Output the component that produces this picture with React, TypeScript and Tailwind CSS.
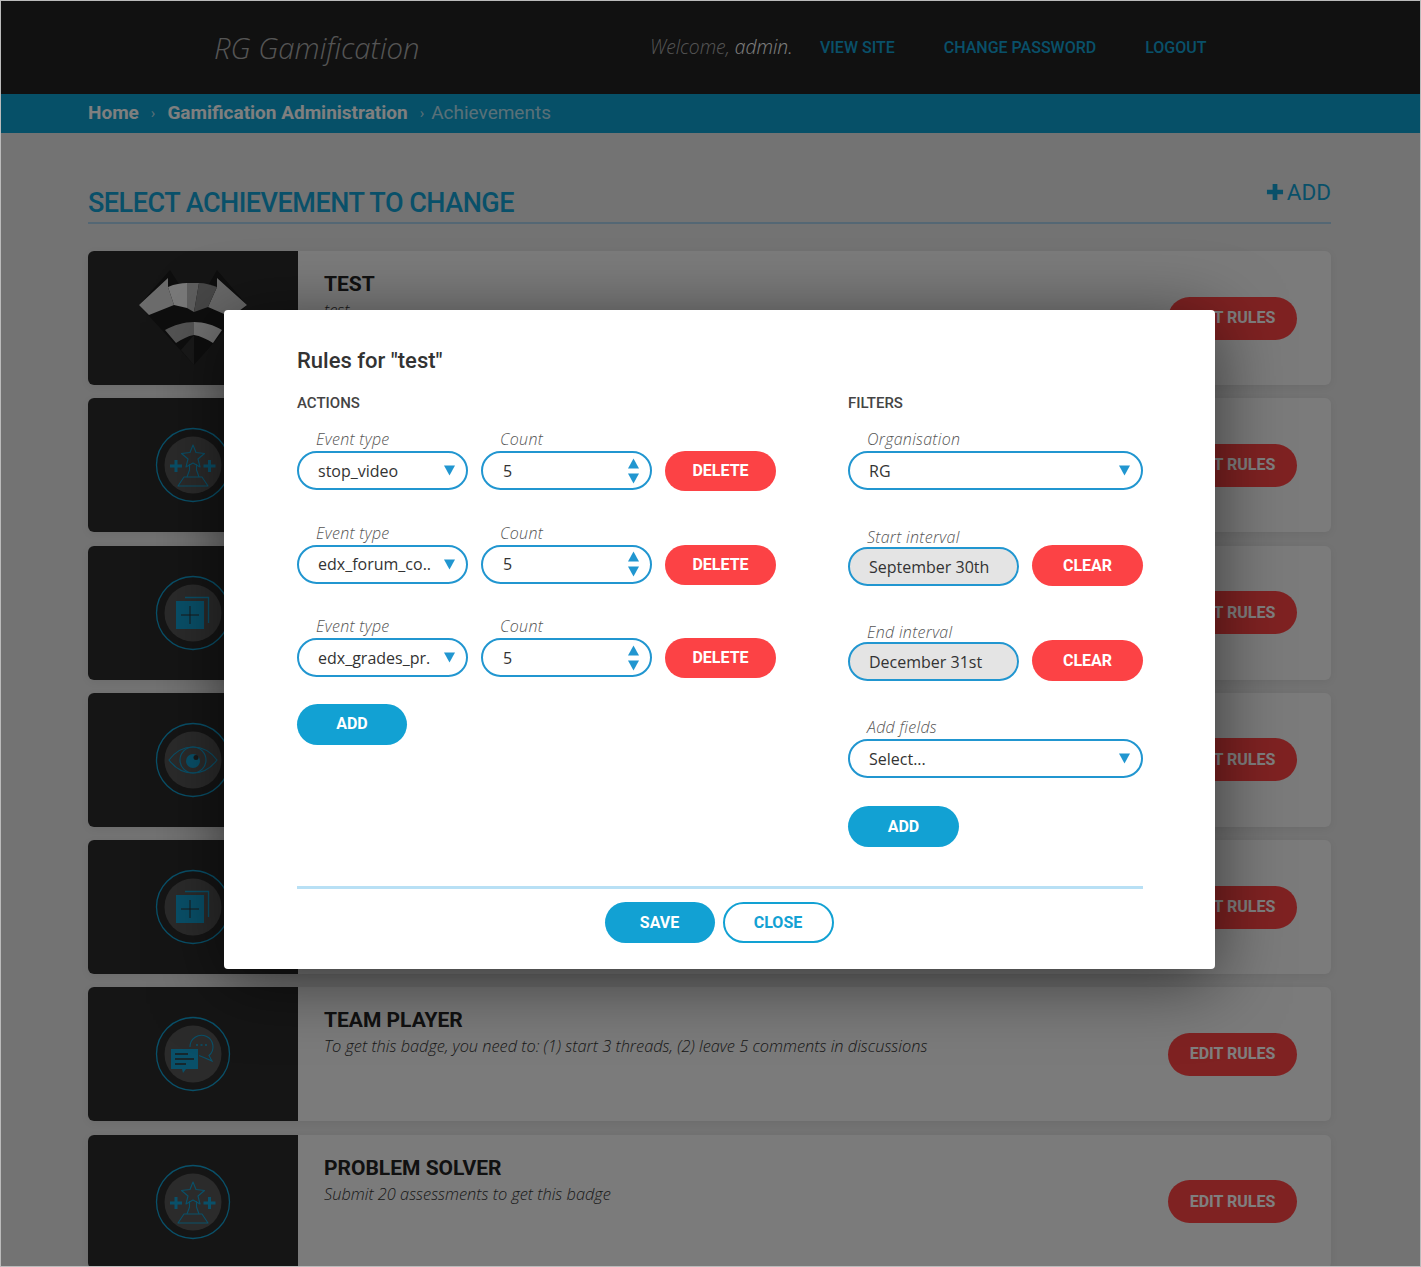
import React from "react";

const BLUE = "#12a1d3";

function Ring({ children }: { children: React.ReactNode }) {
  return (
    <svg width="78" height="78" viewBox="0 0 78 78" fill="none">
      <circle cx="39" cy="39" r="36.5" stroke={BLUE} strokeWidth="1.3" />
      <circle cx="39" cy="39" r="28.5" fill="#565656" />
      {children}
    </svg>
  );
}

function Trophy() {
  return (
    <Ring>
      <g stroke={BLUE} strokeWidth="1.1" fill="none" strokeLinejoin="round">
        <path d="M39 19l3 7.500 8.500 1-6.500 5.500 2 8-7-4-7 4 2-8-6.500-5.500 8.500-1z" />
        <path d="M35.500 38v6l-2.500 7M42.500 38v6l2.500 7" />
        <path d="M30 51h18l6 9H24z" />
      </g>
      <path d="M20.500 34h3v4.500H28v3h-4.500V46h-3v-4.500H16v-3h4.500z" fill={BLUE} />
      <path d="M54 34h3v4.500h4.500v3H57V46h-3v-4.500h-4.500v-3H54z" fill={BLUE} />
    </Ring>
  );
}

function SquarePlus() {
  return (
    <Ring>
      <path d="M31 23.500H54.500V49" stroke={BLUE} strokeWidth="1.300" fill="none" />
      <rect x="22" y="27" width="28" height="28" fill={BLUE} />
      <path d="M36 32v18M27 41h18" stroke="#333" strokeWidth="1" />
    </Ring>
  );
}

function Eye() {
  return (
    <Ring>
      <path d="M15 39c6-8 15-13 24-13s18 5 24 13c-6 8-15 13-24 13s-18-5-24-13z" stroke={BLUE} strokeWidth="1.200" fill="none" />
      <circle cx="39" cy="39" r="13" stroke={BLUE} strokeWidth="1.200" fill="none" />
      <circle cx="39" cy="40" r="7" fill={BLUE} />
      <circle cx="42" cy="36.500" r="2.500" fill="#333" />
    </Ring>
  );
}

function Chat() {
  return (
    <Ring>
      <path d="M36 32a11.500 11.500 0 1 1 19 8.500l3 5.500-8-3.500-5-2" stroke={BLUE} strokeWidth="1.100" fill="none" />
      <path d="M42 30h2M46.500 30h2M51 30h2" stroke={BLUE} strokeWidth="1.500" />
      <path d="M17 34h27v20H32l-3 4-1-4H17z" fill={BLUE} />
      <path d="M21 39h13M21 44h19M21 49h11" stroke="#333" strokeWidth="1.500" />
    </Ring>
  );
}

function Fox() {
  return (
    <svg width="112" height="96" viewBox="0 0 112 96">
      <path d="M33 0L2 35 57 95 110 35 80 0 72 14H42z" fill="#1c1c1c" />
      <path d="M31 8L2 35 12 45 37 35 31 17z" fill="#d8d8d8" />
      <path d="M80 8L110 35 94 47 71 37 80 17z" fill="#d0d0d0" />
      <path d="M31 17C38 14 44 13 50 13L50 38 37 35z" fill="#f2f2f2" />
      <path d="M50 13H62L57 42 50 38z" fill="#bdbdbd" />
      <path d="M62 13C68 13 74 15 80 17L71 37 57 42z" fill="#8f8f8f" />
      <path d="M28 60C37 55 47 52 57 52L57 65C51 66 45 69 39 73z" fill="#a8a8a8" />
      <path d="M57 52C67 52 77 55 85 60L76 73C70 69 63 66 57 65z" fill="#e4e4e4" />
      <path d="M57 65L57 95 44 80z" fill="#333" />
    </svg>
  );
}

const cards: { title: string; desc: string; icon: React.ReactNode }[] = [
  { title: "TEST", desc: "test", icon: <Fox /> },
  { title: "", desc: "", icon: <Trophy /> },
  { title: "", desc: "", icon: <SquarePlus /> },
  { title: "", desc: "", icon: <Eye /> },
  { title: "", desc: "", icon: <SquarePlus /> },
  { title: "TEAM PLAYER", desc: "To get this badge, you need to: (1) start 3 threads, (2) leave 5 comments in discussions", icon: <Chat /> },
  { title: "PROBLEM SOLVER", desc: "Submit 20 assessments to get this badge", icon: <Trophy /> },
];

function Tri({ up }: { up?: boolean }) {
  return (
    <svg width="11" height="11" viewBox="0 0 11 11" className="shrink-0">
      <path d={up ? "M5.500 0.500L11 10.500H0z" : "M0 .5h11L5.500 10.500z"} fill="#2196d0" />
    </svg>
  );
}

function Label({ children, className = "" }: { children: React.ReactNode; className?: string }) {
  return <div className={`font-['Open_Sans'] italic font-light text-[16px] leading-[20px] tracking-[0.3px] text-[#555] pl-[19px] ${className}`}>{children}</div>;
}

function SelectBox({ value, w }: { value: string; w: string }) {
  return (
    <div className={`${w} h-[39px] rounded-[20px] border-2 border-[#2196d0] flex items-center pl-[19px] pr-[11px] justify-between bg-white`}>
      <span className="font-['Open_Sans'] text-[16px] text-[#333] truncate">{value}</span>
      <Tri />
    </div>
  );
}

function CountBox() {
  return (
    <div className="w-[171px] h-[39px] rounded-[20px] border-2 border-[#2196d0] flex items-center pl-[20px] pr-[11px] justify-between bg-white">
      <span className="font-['Open_Sans'] text-[16px] text-[#333]">5</span>
      <div className="flex flex-col gap-[4px]">
        <Tri up />
        <Tri />
      </div>
    </div>
  );
}

function Btn({ children, red, outline, w = "w-[111px]", h = "h-[41px]" }: { children: React.ReactNode; red?: boolean; outline?: boolean; w?: string; h?: string }) {
  const c = red ? "bg-[#fc4245] text-white" : outline ? "bg-white text-[#12a1d3] border-2 border-[#12a1d3]" : "bg-[#12a1d3] text-white";
  return <div className={`${w} ${h} rounded-[21px] flex items-center justify-center font-['Roboto'] font-bold text-[16px] shrink-0 ${c}`}>{children}</div>;
}

function ActionRow({ value }: { value: string }) {
  return (
    <div className="h-[93.500px]">
      <div className="flex gap-[13px] items-end">
        <div className="w-[171px]">
          <Label className="mb-[2px]">Event type</Label>
          <SelectBox value={value} w="w-[171px]" />
        </div>
        <div className="w-[171px]">
          <Label className="mb-[2px]">Count</Label>
          <CountBox />
        </div>
        <div className="-mb-[1px]"><Btn red h="h-[40px]">DELETE</Btn></div>
      </div>
    </div>
  );
}

function DateRow({ label, value }: { label: string; value: string }) {
  return (
    <div className="flex gap-[13px] items-end">
      <div className="w-[171px]">
        <Label>{label}</Label>
        <div className="h-[39px] rounded-[20px] border-2 border-[#2196d0] bg-[#e4e4e4] flex items-center pl-[19px] font-['Open_Sans'] text-[16px] text-[#333]">{value}</div>
      </div>
      <Btn red>CLEAR</Btn>
    </div>
  );
}

export default function App() {
  return (
    <div className="relative w-full h-[1267px] overflow-hidden bg-[#e6e6e6] font-['Open_Sans']">
      <header className="h-[94px] bg-[#222] flex items-center border-t border-[#ddd]">
        <div className="ml-[214px] w-[436px] mt-[2px] font-['Open_Sans'] italic font-light text-[29.300px] text-[#aaa]">RG Gamification</div>
        <div className="flex items-center">
          <span className="w-[170px] italic font-light text-[19.300px] text-[#aaa] whitespace-nowrap">Welcome, <span className="text-white">admin.</span></span>
          <nav className="flex gap-[49px] font-['Roboto'] font-medium text-[16px] text-[#12a1d3]">
            <span>VIEW SITE</span>
            <span>CHANGE PASSWORD</span>
            <span>LOGOUT</span>
          </nav>
        </div>
      </header>
      <div className="h-[39px] bg-[#0ca0d0] flex items-center pl-[88px] font-['Roboto'] text-[19px]">
        <span className="font-bold text-white">Home</span>
        <span className="mx-[12px] text-white/70 text-[15px]">›</span>
        <span className="font-bold text-white">Gamification Administration</span>
        <span className="ml-[12px] mr-[7px] text-white/70 text-[15px]">›</span>
        <span className="text-white/70">Achievements</span>
      </div>

      <main className="mx-[88px] w-[1243px]">
        <div className="h-[91px] flex items-start justify-between border-b-2 border-[#a8cfe8]">
          <h1 className="mt-[52px] font-['Roboto'] font-medium text-[27px] leading-[36px] tracking-[-0.5px] text-[#12a1d3]">SELECT ACHIEVEMENT TO CHANGE</h1>
          <div className="mt-[44px] flex items-center gap-[3px] font-['Roboto'] text-[22.500px] leading-[30px] text-[#12a1d3]">
            <svg width="18" height="18" viewBox="0 0 19 19"><path d="M7 1h5v6h6v5h-6v6H7v-6H1V7h6z" fill="#12a1d3" /></svg>
            ADD
          </div>
        </div>

        <div className="mt-[27px] flex flex-col gap-[13.300px]">
          {cards.map((c, i) => (
            <div key={i} className="h-[134px] shrink-0 rounded-[6px] bg-[#f6f6f6] flex overflow-hidden shadow-[0_2px_8px_rgba(0,0,0,0.06)]">
              <div className="w-[210px] bg-[#2b2b2b] flex items-center justify-center shrink-0">{c.icon}</div>
              <div className="flex-1 pl-[26px] pt-[19px]">
                <div className="font-['Roboto'] font-bold text-[21px] leading-[28px] text-[#222]">{c.title}</div>
                <div className="italic font-light text-[16.350px] leading-[22px] mt-[1px] text-[#333]">{c.desc}</div>
              </div>
              <div className="flex items-center pr-[34px]">
                <div className="w-[129px] h-[43px] rounded-[22px] bg-[#ff4444] text-white flex items-center justify-center font-['Roboto'] font-bold text-[16px]">EDIT RULES</div>
              </div>
            </div>
          ))}
        </div>
      </main>

      <div className="absolute inset-0 bg-black/50" />

      <div className="absolute left-[224px] top-[310px] w-[991px] h-[659px] bg-white rounded-[4px] shadow-[0_12px_70px_rgba(0,0,0,0.55)] pl-[73px] pr-[72px] pt-[36px]">
        <h2 className="font-['Roboto'] font-medium text-[22px] leading-[30px] text-[#333]">Rules for "test"</h2>
        <div className="flex justify-between h-[493px] mt-[17px]">
          <div className="w-[479px]">
            <div className="font-['Roboto'] font-medium text-[15px] leading-[20px] text-[#444] mb-[16px]">ACTIONS</div>
            <ActionRow value="stop_video" />
            <ActionRow value="edx_forum_co.." />
            <ActionRow value="edx_grades_pr." />
            <div className="-mt-[6px]"><Btn w="w-[110px]">ADD</Btn></div>
          </div>
          <div className="w-[295px]">
            <div className="font-['Roboto'] font-medium text-[15px] leading-[20px] text-[#444] mb-[16px]">FILTERS</div>
            <Label className="mb-[2px]">Organisation</Label>
            <SelectBox value="RG" w="w-[295px]" />
            <div className="mt-[37px]"><DateRow label="Start interval" value="September 30th" /></div>
            <div className="mt-[36px]"><DateRow label="End interval" value="December 31st" /></div>
            <Label className="mt-[36px] mb-[2px]">Add fields</Label>
            <SelectBox value="Select..." w="w-[295px]" />
            <div className="mt-[28px]"><Btn>ADD</Btn></div>
          </div>
        </div>
        <div className="h-[3px] bg-[#b8e0f5]" />
        <div className="flex justify-center gap-[8px] mt-[13px] pr-[2px]">
          <Btn w="w-[110px]">SAVE</Btn>
          <Btn outline>CLOSE</Btn>
        </div>
      </div>
      <div className="absolute inset-0 border border-[#bbb] pointer-events-none" />
    </div>
  );
}
